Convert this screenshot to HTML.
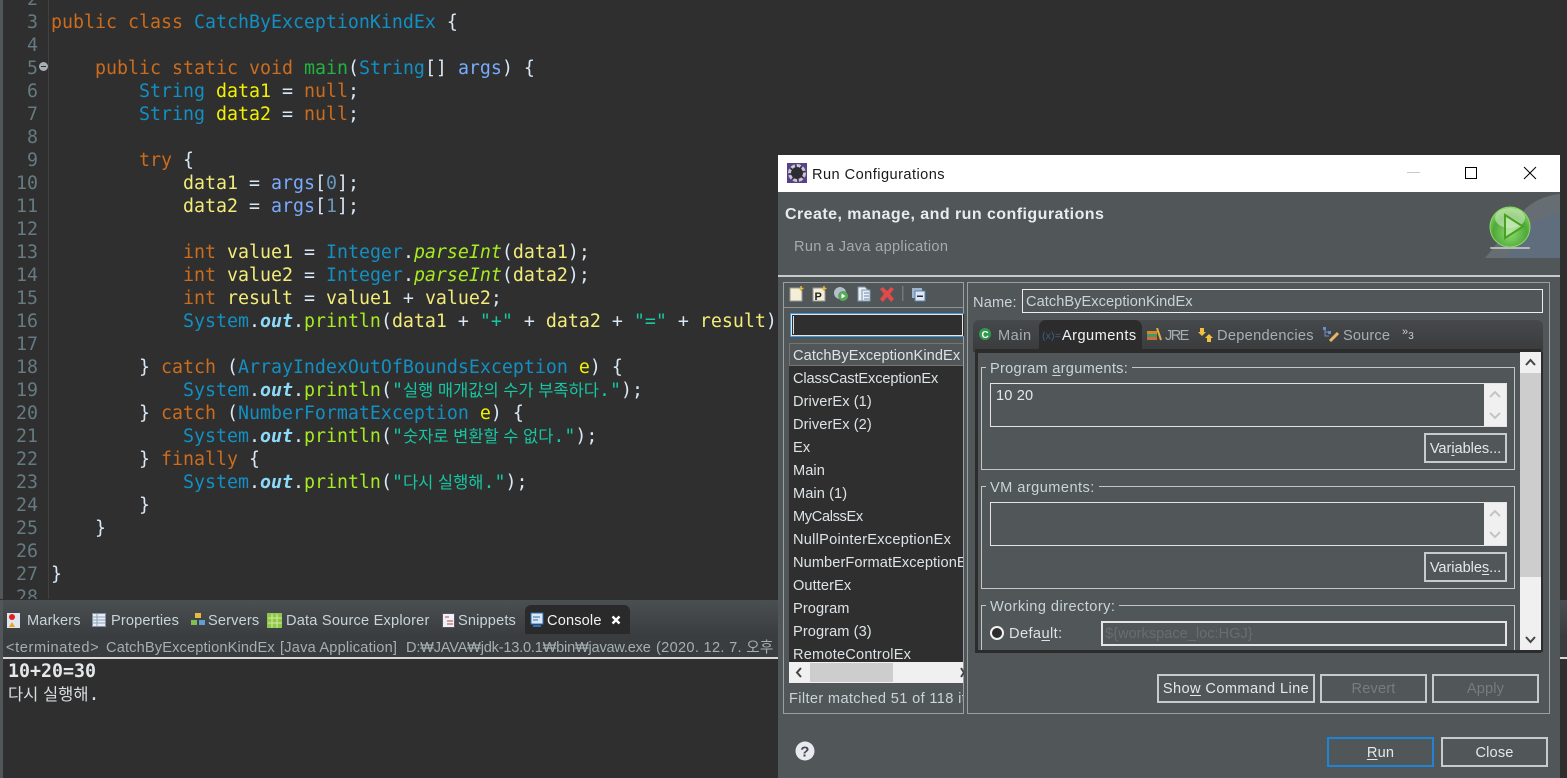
<!DOCTYPE html>
<html lang="ko"><head><meta charset="utf-8"><title>Run Configurations</title>
<style>
html,body{margin:0;padding:0;background:#2f2f2f;}
#root{position:relative;width:1567px;height:778px;overflow:hidden;background:#2f2f2f;font-family:"Liberation Sans","Noto Sans CJK KR",sans-serif;}
.a{position:absolute;box-sizing:border-box;}
.t{position:absolute;white-space:nowrap;font-size:14.6px;line-height:20px;color:#c9d4da;letter-spacing:.15px;}
#nums,#code{position:absolute;top:-35px;font-family:"DejaVu Sans Mono","Noto Sans CJK KR",monospace;font-size:18.27px;line-height:23px;white-space:pre;}
#nums{left:0;width:38px;text-align:right;color:#667a82;}
#code{left:51px;color:#d9e8f7;}
#code div,#nums div{height:23px;}
.k{color:#cc6c1d}.c{color:#1290c3}.v{color:#f2f200}.d{color:#f3ec79}.g{color:#79abff}.m{color:#1eb540}
.p{color:#a7ec21}.i{color:#a7ec21;font-style:italic}.o{color:#8ddaf8;font-style:italic;font-weight:bold}
.s{color:#17c6a3}.n{color:#6897bb}
.h{font-family:"Noto Sans CJK KR",sans-serif;font-size:16.5px;line-height:0}
.btn{position:absolute;box-sizing:border-box;border:2px solid #c8cbcc;background:#515658;color:#e4e8ea;font-size:14.6px;line-height:27px;text-align:center;white-space:nowrap;letter-spacing:.15px;}
.off{color:#777c7e}
.box{position:absolute;box-sizing:border-box;border:1px solid #c4c7c8;}
.inp{position:absolute;box-sizing:border-box;border:2px solid #e8e8e8;background:#515658;}
.sb{position:absolute;background:#f0f0f0;box-sizing:border-box;}
.li{position:absolute;left:793px;white-space:nowrap;font-size:14.6px;line-height:23px;color:#dde3e6;width:170px;overflow:hidden;letter-spacing:.08px;}
.st{color:#a4aeb3;top:638px}
u{text-underline-offset:2px}
</style></head><body><div id="root">

<div class="a" style="left:0;top:0;width:3px;height:600px;background:#515658"></div>
<div class="a" style="left:48px;top:0;width:1px;height:600px;background:#414141"></div>
<div id="nums"><div></div><div>2</div><div>3</div><div>4</div><div>5</div><div>6</div><div>7</div><div>8</div><div>9</div><div>10</div><div>11</div><div>12</div><div>13</div><div>14</div><div>15</div><div>16</div><div>17</div><div>18</div><div>19</div><div>20</div><div>21</div><div>22</div><div>23</div><div>24</div><div>25</div><div>26</div><div>27</div><div>28</div></div>
<div class="a" style="left:39px;top:62px;width:9px;height:9px;border-radius:50%;background:#a8b0b5"><div class="a" style="left:2px;top:4px;width:5px;height:1px;background:#2f2f2f"></div></div>
<div id="code"><div></div><div></div><div><span class="k">public class</span> <span class="c">CatchByExceptionKindEx</span> {</div><div></div><div>    <span class="k">public static void</span> <span class="m">main</span>(<span class="c">String</span>[] <span class="g">args</span>) {</div><div>        <span class="c">String</span> <span class="v">data1</span> = <span class="k">null</span>;</div><div>        <span class="c">String</span> <span class="v">data2</span> = <span class="k">null</span>;</div><div></div><div>        <span class="k">try</span> {</div><div>            <span class="d">data1</span> = <span class="g">args</span>[<span class="n">0</span>];</div><div>            <span class="d">data2</span> = <span class="g">args</span>[<span class="n">1</span>];</div><div></div><div>            <span class="k">int</span> <span class="d">value1</span> = <span class="c">Integer</span>.<span class="i">parseInt</span>(<span class="d">data1</span>);</div><div>            <span class="k">int</span> <span class="d">value2</span> = <span class="c">Integer</span>.<span class="i">parseInt</span>(<span class="d">data2</span>);</div><div>            <span class="k">int</span> <span class="d">result</span> = <span class="d">value1</span> + <span class="d">value2</span>;</div><div>            <span class="c">System</span>.<span class="o">out</span>.<span class="p">println</span>(<span class="d">data1</span> + <span class="s">"+"</span> + <span class="d">data2</span> + <span class="s">"="</span> + <span class="d">result</span>);</div><div></div><div>        } <span class="k">catch</span> (<span class="c">ArrayIndexOutOfBoundsException</span> <span class="v">e</span>) {</div><div>            <span class="c">System</span>.<span class="o">out</span>.<span class="p">println</span>(<span class="s">"<span class="h">실행 매개값의 수가 부족하다</span>."</span>);</div><div>        } <span class="k">catch</span> (<span class="c">NumberFormatException</span> <span class="v">e</span>) {</div><div>            <span class="c">System</span>.<span class="o">out</span>.<span class="p">println</span>(<span class="s">"<span class="h">숫자로 변환할 수 없다</span>."</span>);</div><div>        } <span class="k">finally</span> {</div><div>            <span class="c">System</span>.<span class="o">out</span>.<span class="p">println</span>(<span class="s">"<span class="h">다시 실행해</span>."</span>);</div><div>        }</div><div>    }</div><div></div><div>}</div></div>

<!-- bottom panel -->
<div class="a" style="left:0;top:599px;width:1567px;height:179px;background:#2f2f2f"></div>
<div class="a" style="left:3px;top:600px;width:1564px;height:34px;background:linear-gradient(#4a4f52,#3b3e40)"></div>
<div class="a" style="left:525px;top:605px;width:105px;height:29px;background:#2a2a2a;border-radius:6px 6px 0 0"></div>
<div class="a" style="left:3px;top:634px;width:1564px;height:24px;background:#3a3d3f"></div>
<div class="a" style="left:3px;top:657px;width:1564px;height:2px;background:#d8d8d8"></div>
<div class="a" style="left:0;top:600px;width:3px;height:178px;background:#515658"></div>
<svg class="a" style="left:7px;top:613px" width="15" height="16"><rect x="0" y="0" width="13" height="15" fill="#dfe6ee"/><circle cx="5" cy="4" r="3" fill="#e02020"/><path d="M2 14l3-5 3 5z" fill="#f0a020"/></svg>
<div class="t" style="left:27px;top:611px">Markers</div>
<svg class="a" style="left:92px;top:613px" width="14" height="14"><rect x=".5" y=".5" width="13" height="13" fill="#e8edf2" stroke="#7f93ad"/><path d="M1 4h12M1 7h12M1 10h12M5 1v12" stroke="#8fa3bb"/></svg>
<div class="t" style="left:111px;top:611px">Properties</div>
<svg class="a" style="left:191px;top:613px" width="14" height="14"><rect x="4" y="0" width="6" height="5" fill="#e8b840"/><rect x="0" y="7" width="6" height="5" fill="#7fc050"/><rect x="8" y="7" width="6" height="5" fill="#5f9fd0"/></svg>
<div class="t" style="left:208px;top:611px">Servers</div>
<svg class="a" style="left:267px;top:612px" width="16" height="17"><rect x="0" y="1" width="15" height="15" fill="#8ec84a"/><path d="M1 6h14M1 11h14M5 2v14M10 2v14" stroke="#d8e8a0"/></svg>
<div class="t" style="left:286px;top:611px;letter-spacing:.2px">Data Source Explorer</div>
<svg class="a" style="left:442px;top:613px" width="14" height="15"><rect x=".5" y=".5" width="12" height="14" fill="#eef2f6" stroke="#556"/><path d="M3 4h4M5 8h6M5 11h6" stroke="#c04040"/></svg>
<div class="t" style="left:458px;top:611px">Snippets</div>
<svg class="a" style="left:530px;top:612px" width="14" height="16"><rect x="1" y="1" width="12" height="11" fill="#dce8f6" stroke="#2f6fb0"/><path d="M3 5h7M3 8h5" stroke="#2f6fb0"/><rect x="3" y="13" width="8" height="2" fill="#2f6fb0"/></svg>
<div class="t" style="left:547px;top:611px;color:#f0f3f5">Console</div>
<svg class="a" style="left:611px;top:615px" width="10" height="10"><path d="M1.5 1.5l7 7M8.5 1.5l-7 7" stroke="#fff" stroke-width="2.4"/></svg>
<div class="t st" style="left:6px;letter-spacing:.6px">&lt;terminated&gt;</div>
<div class="t st" style="left:106px;letter-spacing:.15px">CatchByExceptionKindEx</div>
<div class="t st" style="left:280px;letter-spacing:.2px">[Java Application]</div>
<div class="t st" style="left:406px;letter-spacing:-.22px">D:₩JAVA₩jdk-13.0.1₩bin₩javaw.exe</div>
<div class="t st" style="left:656px;letter-spacing:.3px">(2020. 12. 7. 오후 9</div>
<div class="a" style="left:8px;top:660px;font:bold 18.27px/23px 'DejaVu Sans Mono',monospace;color:#e4e8ea;white-space:pre">10+20=30</div>
<div class="a" style="left:8px;top:683px;font:18.27px/23px 'DejaVu Sans Mono','Noto Sans CJK KR',monospace;color:#d8dde0;white-space:pre"><span class="h">다시 실행해</span>.</div>

<!-- dialog -->
<div class="a" style="left:778px;top:155px;width:782px;height:623px;background:#515658;overflow:hidden">
</div>
<div class="a" style="left:778px;top:155px;width:782px;height:37px;background:#fff"></div>
<svg class="a" style="left:787px;top:163px" width="20" height="20"><rect width="20" height="20" fill="#5a3f8a"/><circle cx="10" cy="10" r="7.5" fill="#2c2c34" stroke="#c8c8cc" stroke-width="3" stroke-dasharray="4 1.8"/></svg>
<div class="t" style="left:812px;top:165px;color:#1a1a1a;letter-spacing:.45px">Run Configurations</div>
<div class="a" style="left:1407px;top:172px;width:13px;height:1px;background:#c8c8c8"></div>
<div class="a" style="left:1465px;top:167px;width:12px;height:12px;border:1px solid #000"></div>
<svg class="a" style="left:1523px;top:166px" width="14" height="14"><path d="M1 1l12 12M13 1L1 13" stroke="#000" stroke-width="1"/></svg>
<div class="t" style="left:785px;top:205px;font-weight:bold;color:#e8ecee;font-size:16px;letter-spacing:.45px">Create, manage, and run configurations</div>
<div class="t" style="left:794px;top:237px;color:#a6abae;letter-spacing:.3px">Run a Java application</div>
<svg class="a" style="left:1484px;top:192px" width="76" height="66"><defs><radialGradient id="gb" cx="50%" cy="65%" r="60%"><stop offset="0" stop-color="#8fdc70"/><stop offset=".7" stop-color="#4fa83a"/><stop offset="1" stop-color="#7ccf5a"/></radialGradient></defs><path d="M1 66L42 16Q56 4 76 2V66z" fill="#666e74"/><path d="M24 66Q36 26 76 22V66z" fill="#5f6d7c"/><rect x="6" y="55" width="40" height="2" rx="1" fill="#d8dcd8" opacity=".7"/><circle cx="26" cy="35" r="20" fill="url(#gb)" stroke="#8ad866" stroke-width="1"/><ellipse cx="26" cy="26" rx="15" ry="10" fill="#c7e6b8" opacity=".65"/><path d="M21 23v23l18-11.500z" fill="#cdeec0" fill-opacity=".6" stroke="#4aa020" stroke-width="2"/></svg>
<div class="a" style="left:778px;top:275px;width:782px;height:2px;background:#c8cbcc"></div>

<div class="box" style="left:783px;top:282px;width:181px;height:432px;border-color:#9a9fa1"></div>
<div class="a" style="left:784px;top:307px;width:179px;height:1px;background:#8d9294"></div>
<svg class="a" style="left:788px;top:285px" width="145" height="18">
<path d="M2 3h9l3 3v10H2z" fill="#f4eed8" stroke="#999"/><path d="M13 1v5M10.500 3.500h5" stroke="#e8c040" stroke-width="1.400"/>
<path d="M25 3h9l3 3v10H25z" fill="#f4eed8" stroke="#999"/><text x="26.500" y="15" font-size="11" font-weight="bold" font-family="Liberation Sans" fill="#222">P</text><path d="M36 1v5M33.500 3.500h5" stroke="#e8c040" stroke-width="1.400"/>
<circle cx="52" cy="8" r="6" fill="#b4c0cc"/><circle cx="55" cy="11" r="5" fill="#58a858"/><path d="M53.500 8.500v5l4-2.500z" fill="#fff"/>
<path d="M70 2h7l3 3v11H70z" fill="#e8eef4" stroke="#7a94ad"/><path d="M74 5h8v11h-8z" fill="#e8eef4" stroke="#7a94ad"/><path d="M76 8h5M76 11h5M76 14h5" stroke="#6a88a8"/>
<path d="M92 4l3-2 4 4 4-4 3 2-4 5 4 5-3 3-4-5-4 5-3-3 4-5z" fill="#e04a4a"/>
<rect x="114" y="1" width="1.500" height="15" fill="#777"/>
<rect x="124" y="3" width="10" height="10" fill="#9fb6cf"/><rect x="127" y="6" width="10" height="10" fill="#dde8f4" stroke="#5a82ad"/><rect x="129" y="10.500" width="6" height="1.500" fill="#234"/>
</svg>
<div class="a" style="left:790px;top:313px;width:174px;height:24px;background:#2f2f2f;border:1px solid #3d9be0;border-right:0;outline:1px solid #e6e6e6;outline-offset:-2px"></div>
<div class="a" style="left:793px;top:316px;width:1px;height:18px;background:#ddd"></div>
<div class="a" style="left:789px;top:343px;width:174px;height:319px;background:#2f2f2f"></div>
<div class="a" style="left:789px;top:343px;width:174px;height:23px;background:#515658;border:1px solid #75776f;border-right:0"></div>
<div class="li" style="top:345px">CatchByExceptionKindEx</div>
<div class="li" style="top:368px;letter-spacing:-.12px">ClassCastExceptionEx</div>
<div class="li" style="top:391px">DriverEx (1)</div>
<div class="li" style="top:414px">DriverEx (2)</div>
<div class="li" style="top:437px">Ex</div>
<div class="li" style="top:460px">Main</div>
<div class="li" style="top:483px">Main (1)</div>
<div class="li" style="top:506px;letter-spacing:-.35px">MyCalssEx</div>
<div class="li" style="top:529px;letter-spacing:.26px">NullPointerExceptionEx</div>
<div class="li" style="top:552px">NumberFormatExceptionEx</div>
<div class="li" style="top:575px">OutterEx</div>
<div class="li" style="top:598px">Program</div>
<div class="li" style="top:621px">Program (3)</div>
<div class="li" style="top:644px;height:18px;letter-spacing:.2px">RemoteControlEx</div>
<div class="sb" style="left:789px;top:662px;width:174px;height:21px"></div>
<div class="a" style="left:810px;top:663px;width:83px;height:19px;background:#cdcdcd"></div>
<svg class="a" style="left:794px;top:666px" width="170" height="13"><path d="M7 2L3 6.500 7 11" fill="none" stroke="#444" stroke-width="2"/><path d="M167 2l3 4.500-3 4.500" fill="none" stroke="#444" stroke-width="2"/></svg>
<div class="t" style="left:789px;top:689px;width:174px;overflow:hidden;letter-spacing:.35px">Filter matched 51 of 118 items</div>

<div class="box" style="left:967px;top:282px;width:583px;height:432px;border-color:#9a9fa1"></div>
<div class="t" style="left:973px;top:293px">Name:</div>
<div class="inp" style="left:1022px;top:289px;width:521px;height:24px;border-width:1px;border-color:#eee"></div>
<div class="t" style="left:1026px;top:292px;letter-spacing:.05px">CatchByExceptionKindEx</div>

<div class="a" style="left:973px;top:320px;width:570px;height:32px;background:linear-gradient(#46494b,#393b3d);border-radius:6px 6px 0 0"></div>
<div class="a" style="left:1039px;top:320px;width:103px;height:32px;background:#2c2c2c;border-radius:7px 7px 0 0"></div>
<div class="a" style="left:975px;top:349px;width:566px;height:4px;background:#2c2c2c"></div>
<div class="a" style="left:975px;top:349px;width:3px;height:304px;background:#2c2c2c"></div>
<div class="a" style="left:975px;top:650px;width:566px;height:3px;background:#2c2c2c"></div>
<div class="a" style="left:1541px;top:352px;width:2px;height:300px;background:#2c2c2c"></div>
<svg class="a" style="left:978px;top:327px" width="14" height="14"><circle cx="7" cy="7" r="6" fill="#2f9a4e"/><text x="3.500" y="11" font-size="10" font-weight="bold" font-family="Liberation Sans" fill="#fff">C</text></svg>
<div class="t" style="left:998px;top:326px;color:#a7afb3;letter-spacing:.5px">Main</div>
<div class="t" style="left:1042px;top:326px;color:#3f5f86;font-size:10.5px">(x)=</div>
<div class="t" style="left:1062px;top:326px;color:#f0f3f5;letter-spacing:.45px">Arguments</div>
<svg class="a" style="left:1147px;top:328px" width="16" height="13"><rect x="0" y="3" width="10" height="3" fill="#d08a2a"/><rect x="0" y="6" width="10" height="3" fill="#3f9a6a"/><rect x="0" y="9" width="10" height="3" fill="#d06a3a"/><path d="M10 0l4 12" stroke="#e8b040" stroke-width="2"/></svg>
<div class="t" style="left:1165px;top:326px;color:#a7afb3;letter-spacing:-1.6px">JRE</div>
<svg class="a" style="left:1198px;top:328px" width="16" height="14"><path d="M2 0h4v4h2L4 8 0 4h2z" fill="#f0c040"/><path d="M11 6l4 4h-2v4H9v-4H7z" fill="#f0c040"/></svg>
<div class="t" style="left:1217px;top:326px;color:#a7afb3;letter-spacing:.3px">Dependencies</div>
<svg class="a" style="left:1323px;top:327px" width="16" height="15"><path d="M2 1v8h4M2 5h4" stroke="#6a90c8" fill="none"/><rect x="0" y="0" width="3" height="3" fill="#6a90c8"/><rect x="5" y="4" width="3" height="3" fill="#6a90c8"/><path d="M7 14l8-8" stroke="#e8b860" stroke-width="3"/></svg>
<div class="t" style="left:1343px;top:326px;color:#a7afb3">Source</div>
<div class="t" style="left:1402px;top:322px;color:#c8cdd0;font-size:11px">»<span style="font-size:10px;position:relative;top:4px">3</span></div>

<!-- Program args -->
<div class="box" style="left:981px;top:367px;width:534px;height:103px"></div>
<div class="t" style="left:986px;top:359px;background:#515658;padding:0 4px;letter-spacing:.28px;height:18px">Program <u>a</u>rguments:</div>
<div class="inp" style="left:990px;top:383px;width:517px;height:44px;border-width:1px;border-color:#e4e4e4"></div>
<div class="t" style="left:996px;top:386px;color:#e4e8ea">10 20</div>
<div class="sb" style="left:1484px;top:384px;width:22px;height:42px"></div>
<svg class="a" style="left:1488px;top:390px" width="14" height="32"><path d="M2 7l5-5 5 5M2 23l5 5 5-5" fill="none" stroke="#c4c4c4" stroke-width="2"/></svg>
<div class="btn" style="left:1424px;top:433px;width:83px;height:30px;line-height:28px;letter-spacing:-.05px">Var<u>i</u>ables...</div>

<!-- VM args -->
<div class="box" style="left:981px;top:486px;width:534px;height:103px"></div>
<div class="t" style="left:986px;top:478px;background:#515658;padding:0 4px;letter-spacing:.45px;height:18px">VM arguments:</div>
<div class="inp" style="left:990px;top:502px;width:517px;height:44px;border-width:1px;border-color:#e4e4e4"></div>
<div class="sb" style="left:1484px;top:503px;width:22px;height:42px"></div>
<svg class="a" style="left:1488px;top:509px" width="14" height="32"><path d="M2 7l5-5 5 5M2 23l5 5 5-5" fill="none" stroke="#c4c4c4" stroke-width="2"/></svg>
<div class="btn" style="left:1424px;top:552px;width:83px;height:30px;line-height:28px;letter-spacing:-.05px">Variable<u>s</u>...</div>

<!-- Working dir -->
<div class="box" style="left:981px;top:605px;width:534px;height:46px;border-bottom:0"></div>
<div class="t" style="left:986px;top:597px;background:#515658;padding:0 4px;letter-spacing:.45px;height:18px">Working directory:</div>
<div class="a" style="left:990px;top:626px;width:14px;height:14px;border-radius:50%;background:#2c2c2c;border:2px solid #f2f2f2"></div>
<div class="t" style="left:1009px;top:624px;color:#dde3e6;letter-spacing:.4px">Defa<u>u</u>lt:</div>
<div class="inp" style="left:1101px;top:621px;width:406px;height:25px;border-color:#e4e4e4"></div>
<div class="t" style="left:1105px;top:624px;color:#686e70;letter-spacing:0">${workspace_loc:HGJ}</div>
<div class="a" style="left:981px;top:650px;width:539px;height:3px;background:#2c2c2c"></div>

<!-- main scrollbar -->
<div class="sb" style="left:1520px;top:352px;width:21px;height:298px"></div>
<div class="a" style="left:1520px;top:373px;width:21px;height:204px;background:#cdcdcd"></div>
<svg class="a" style="left:1523px;top:356px" width="15" height="290"><path d="M3 9l4.500-5L12 9" fill="none" stroke="#444" stroke-width="2"/><path d="M3 281l4.500 5 4.500-5" fill="none" stroke="#444" stroke-width="2"/></svg>

<div class="btn" style="left:1157px;top:674px;width:158px;height:29px;letter-spacing:.4px">Sho<u>w</u> Command Line</div>
<div class="btn off" style="left:1320px;top:674px;width:107px;height:29px">Revert</div>
<div class="btn off" style="left:1432px;top:674px;width:107px;height:29px">Apply</div>
<svg class="a" style="left:795px;top:741px" width="20" height="20"><circle cx="10" cy="10" r="9.500" fill="#e8eaf0"/><text x="5.200" y="15.500" font-size="15" font-weight="bold" font-family="Liberation Sans" fill="#444a55">?</text></svg>
<div class="btn" style="left:1327px;top:737px;width:107px;height:30px;border-color:#1f84d8;line-height:29px"><u>R</u>un</div>
<div class="btn" style="left:1441px;top:737px;width:107px;height:30px;line-height:29px">Close</div>

</div></body></html>
